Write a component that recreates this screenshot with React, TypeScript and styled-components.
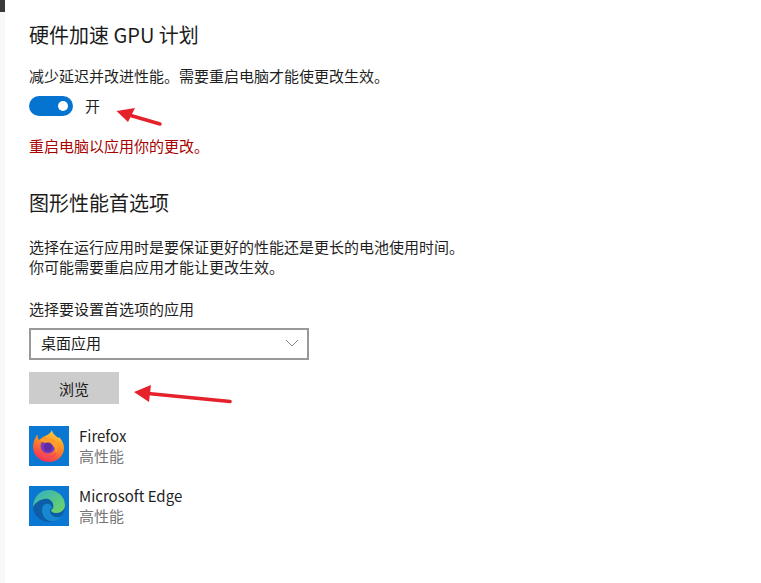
import React from 'react';
import styled, {createGlobalStyle} from "styled-components";

const GlobalStyle = createGlobalStyle`
  html, body {
    margin: 0;
    padding: 0;
    background: #ffffff;
  }
  body {
    font-family: "Noto Sans CJK SC", "Liberation Sans", sans-serif;
    color: #1a1a1a;
  }
`;

const Page = styled.div`
  position: relative;
  width: 761px;
  height: 583px;
  overflow: hidden;
  display: flex;
  background: #ffffff;
`;
const SideEdge = styled.div`
  width: 5px;
  flex: none;
  background: #f8f8f8;
`;
const Corner = styled.div`
  position: absolute;
  left: 0;
  top: 0;
  width: 5px;
  height: 12px;
  background: #3a3a3a;
`;
const Content = styled.main`
  padding: 20px 0 0 24px;
  display: flex;
  flex-direction: column;
  align-items: flex-start;
`;
const Heading = styled.h2<{$top?: number}>`
  margin: ${p => p.$top ?? 0}px 0 0;
  font-size: 20px;
  line-height: 30px;
  font-weight: 400;
  color: #1c1c1c;
`;
const Text = styled.p<{$top?: number; $color?: string}>`
  margin: ${p => p.$top ?? 0}px 0 0;
  font-size: 15px;
  line-height: 20px;
  color: ${p => p.$color ?? '#1f1f1f'};
`;
const ToggleRow = styled.div`
  display: flex;
  align-items: center;
  gap: 12px;
  margin-top: 10px;
  height: 20px;
`;
const Track = styled.div`
  width: 44px;
  height: 20px;
  border-radius: 10px;
  background: #0474d0;
  position: relative;
`;
const Knob = styled.span`
  position: absolute;
  right: 5px;
  top: 5px;
  width: 10px;
  height: 10px;
  border-radius: 50%;
  background: #fff;
`;
const Select = styled.div`
  box-sizing: border-box;
  width: 280px;
  height: 32px;
  margin-top: 9px;
  border: 2px solid #999999;
  display: flex;
  align-items: center;
  justify-content: space-between;
  padding: 0 8px 3px 10px;
  font-size: 15px;
  color: #1a1a1a;
`;
const BrowseButton = styled.button`
  width: 90px;
  height: 32px;
  margin-top: 12px;
  border: 0;
  padding: 0;
  background: #cccccc;
  font: inherit;
  font-size: 15px;
  color: #1a1a1a;
`;
const AppList = styled.div`
  display: flex;
  flex-direction: column;
  gap: 20px;
  margin-top: 22px;
`;
const AppRow = styled.div`
  display: flex;
  gap: 10px;
  align-items: flex-start;
`;
const AppIcon = styled.div<{$bg: string}>`
  width: 40px;
  height: 40px;
  background: ${p => p.$bg};
  display: flex;
`;
const AppMeta = styled.div`
  display: flex;
  flex-direction: column;
`;
const AppName = styled.div`
  font-size: 15px;
  line-height: 20px;
  color: #1f1f1f;
`;
const AppMode = styled.div`
  font-size: 15px;
  line-height: 20px;
  color: #767676;
`;
const Arrow = styled.svg<{$x: number; $y: number}>`
  position: absolute;
  left: ${p => p.$x}px;
  top: ${p => p.$y}px;
`;

const FirefoxLogo = () => (
    <svg width="40" height="40" viewBox="0 0 40 40">
        <defs>
            <linearGradient id="ff" x1="0.75" y1="0" x2="0.3" y2="1">
                <stop offset="0" stopColor="#ffd83f"/>
                <stop offset="0.45" stopColor="#ff8a22"/>
                <stop offset="1" stopColor="#f32a5c"/>
            </linearGradient>
        </defs>
        <path d="M23 4c0 3 3 5 5 7 1 1 2 1 2 0 3 3 5 7 5 11 0 8-7 14-15 14S4 30 4 21c0-4 1-7 3-10 0-1 1-2 2-2-1 2 0 4 1 5 2-2 4-3 6-4 3-1 6-3 7-6z" fill="url(#ff)"/>
        <circle cx="19" cy="20" r="7.5" fill="#7a3bc0"/>
        <path d="M11 14c4-2 10-3 14 0 4 3 5 9 2 13-1-6-4-10-9-10-3 0-6-1-7-3z" fill="#ff9c2b"/>
        <path d="M10 24c3 5 9 7 14 5 2-1 3-2 4-3-2 5-7 7-12 6-3-1-5-4-6-8z" fill="#f6495f"/>
        <circle cx="19" cy="21" r="4.5" fill="#5f2ba6"/>
    </svg>
);

const EdgeLogo = () => (
    <svg width="40" height="40" viewBox="0 0 40 40">
        <defs>
            <linearGradient id="eg" x1="0" y1="0" x2="1" y2="1">
                <stop offset="0" stopColor="#2fb0c6"/>
                <stop offset="1" stopColor="#74d65f"/>
            </linearGradient>
        </defs>
        <circle cx="20" cy="20" r="16" fill="#0d5ea6"/>
        <path d="M4 21C4 11 11 4 20 4c9 0 16 7 16 15 0 5-4 8-9 8-3 0-5-1-5-3 2-1 3-3 2-6-1-4-5-6-9-5-5 1-9 4-11 8z" fill="url(#eg)"/>
        <path d="M13 24c0-4 3-7 7-6 2 1 3 2 3 4-3 1-3 6 1 8 3 2 7 1 9 0-3 4-8 6-12 5-5-1-8-6-8-11z" fill="#1888d2"/>
    </svg>
);

const App: React.FC = () => {
    return (
        <Page>
            <GlobalStyle/>
            <SideEdge/>
            <Corner/>
            <Content>
                <Heading>硬件加速 GPU 计划</Heading>
                <Text $top={16}>减少延迟并改进性能。需要重启电脑才能使更改生效。</Text>
                <ToggleRow>
                    <Track><Knob/></Track>
                    <Text>开</Text>
                </ToggleRow>
                <Text $top={20} $color="#a80000">重启电脑以应用你的更改。</Text>
                <Heading $top={32}>图形性能首选项</Heading>
                <Text $top={19}>选择在运行应用时是要保证更好的性能还是更长的电池使用时间。</Text>
                <Text>你可能需要重启应用才能让更改生效。</Text>
                <Text $top={22}>选择要设置首选项的应用</Text>
                <Select>
                    桌面应用
                    <svg width="14" height="8" viewBox="0 0 14 8">
                        <path d="M1 1l6 6 6-6" fill="none" stroke="#8a8a8a" strokeWidth="1"/>
                    </svg>
                </Select>
                <BrowseButton>浏览</BrowseButton>
                <AppList>
                    <AppRow>
                        <AppIcon $bg="#0a78d2"><FirefoxLogo/></AppIcon>
                        <AppMeta>
                            <AppName>Firefox</AppName>
                            <AppMode>高性能</AppMode>
                        </AppMeta>
                    </AppRow>
                    <AppRow>
                        <AppIcon $bg="#0a78d2"><EdgeLogo/></AppIcon>
                        <AppMeta>
                            <AppName>Microsoft Edge</AppName>
                            <AppMode>高性能</AppMode>
                        </AppMeta>
                    </AppRow>
                </AppList>
            </Content>
            <Arrow $x={115} $y={107} width="48" height="22" viewBox="0 0 48 22">
                <path d="M45 17L14 8" stroke="#e5212b" strokeWidth="3.4" strokeLinecap="round"/>
                <path d="M1.5 4L20 1L13 15z" fill="#e5212b"/>
            </Arrow>
            <Arrow $x={132} $y={384} width="102" height="22" viewBox="0 0 102 22">
                <path d="M98 17.5L16 9.5" stroke="#e5212b" strokeWidth="3.6" strokeLinecap="round"/>
                <path d="M2 8L19 1L17 18z" fill="#e5212b"/>
            </Arrow>
        </Page>
    );
};

export default App;
